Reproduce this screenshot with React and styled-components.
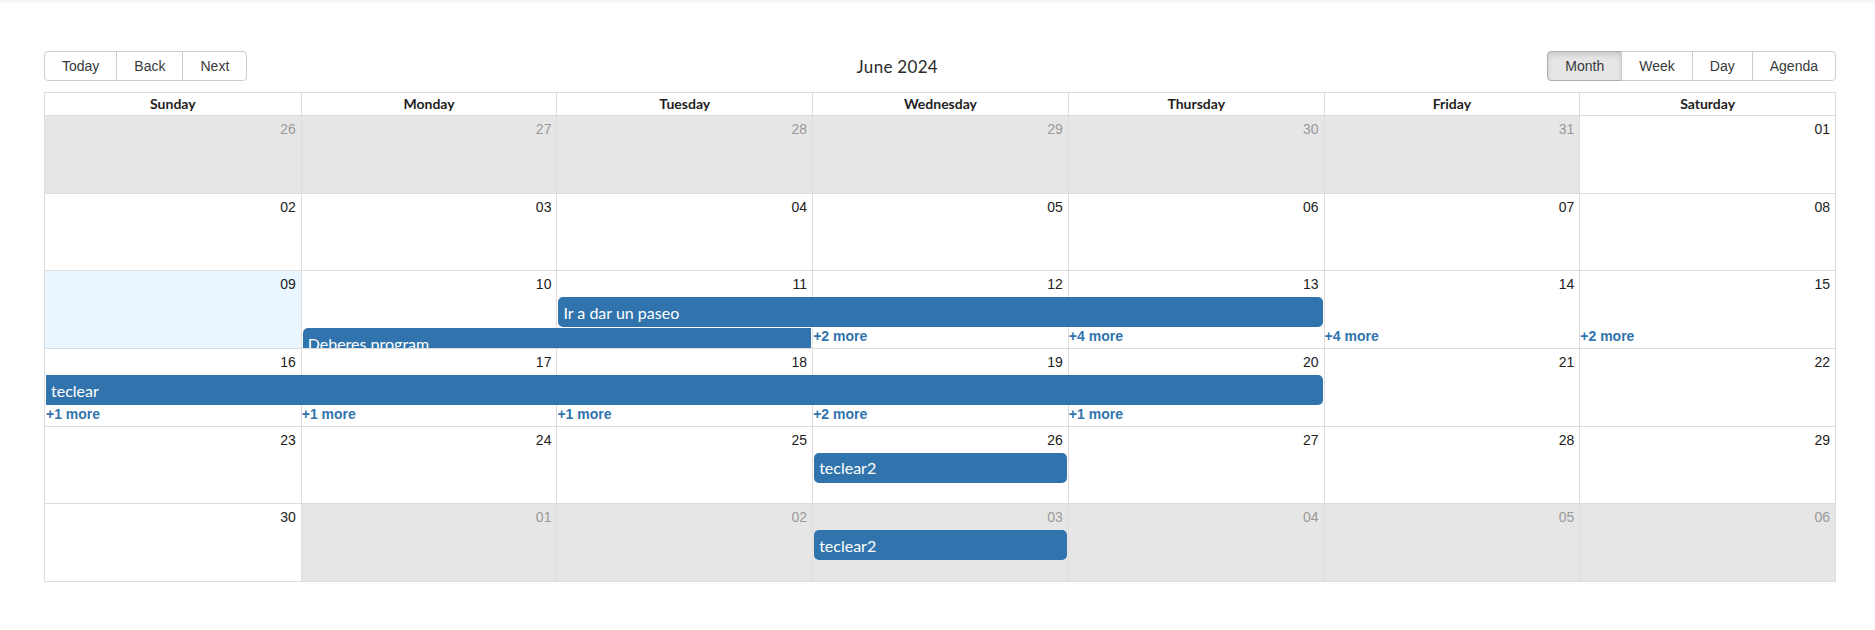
import React from "react";
import styled, { createGlobalStyle, css } from "styled-components";

const Global = createGlobalStyle`
  html, body { margin: 0; padding: 0; background: #fff; }
  body { font-family: "Liberation Sans", Arial, sans-serif; color: #373a3c; }
  * { box-sizing: border-box; }
`;

const TopShade = styled.div`
  height: 2px;
  background: #f4f4f4;
  box-shadow: 0 1px 5px rgba(0, 0, 0, 0.07);
`;

const Page = styled.div`
  padding: 49px 39px 0 44px;
`;

const Toolbar = styled.div`
  display: flex;
  align-items: center;
  margin-bottom: 11px;
`;

const Group = styled.div`
  display: inline-flex;
`;

const Btn = styled.button`
  font-family: "Liberation Sans", Arial, sans-serif;
  font-size: 14px;
  color: #373a3c;
  background: ${(p) => (p.$active ? "#e6e6e6" : "#fff")};
  border: 1px solid ${(p) => (p.$active ? "#adadad" : "#ccc")};
  box-shadow: ${(p) => (p.$active ? "inset 0 3px 5px rgba(0,0,0,.125)" : "none")};
  height: 30px;
  padding: 0 17px;
  margin: 0;
  border-radius: 0;
  & + & { margin-left: -1px; }
  &:first-child { border-radius: 4px 0 0 4px; }
  &:last-child { border-radius: 0 4px 4px 0; }
`;

const Label = styled.span`
  flex: 1;
  text-align: center;
  font-family: Lato, "Open Sans", sans-serif;
  font-size: 17px;
  font-weight: 400;
  color: #2b2b2b;
  letter-spacing: 0.3px;
`;

const Month = styled.div`
  border: 1px solid #ddd;
  display: flex;
  flex-direction: column;
  height: 490px;
`;

const HeaderRow = styled.div`
  display: grid;
  grid-template-columns: repeat(7, 1fr);
  border-bottom: 1px solid #ddd;
  height: 23px;
`;

const HeaderCell = styled.div`
  text-align: center;
  font-family: Lato, "Open Sans", sans-serif;
  font-weight: 700;
  font-size: 14px;
  line-height: 21px;
  color: #1e1e1e;
  & + & { border-left: 1px solid #ddd; }
`;

const Week = styled.div`
  flex: 1;
  display: grid;
  grid-template-columns: repeat(7, 1fr);
  grid-template-rows: 26px 31px 1fr;
  overflow: hidden;
  min-height: 0;
  & + & { border-top: 1px solid #ddd; }
`;

const DayBg = styled.div`
  grid-row: 1 / -1;
  grid-column: ${(p) => p.$col + 1};
  background: ${(p) => (p.$off ? "#e6e6e6" : p.$today ? "#eaf6ff" : "transparent")};
  ${(p) => p.$col > 0 && css`border-left: 1px solid #ddd;`}
`;

const DateCell = styled.div`
  grid-row: 1;
  grid-column: ${(p) => p.$col + 1};
  text-align: right;
  padding: 5px 5px 0 0;
  font-size: 14px;
  line-height: 16px;
  color: ${(p) => (p.$off ? "#999" : "#222")};
  z-index: 1;
`;

const Segment = styled.div`
  grid-row: ${(p) => p.$level + 1};
  grid-column: ${(p) => p.$start + 1} / span ${(p) => p.$span};
  padding: 0 1px 1px ${(p) => (p.$start === 0 ? "1px" : "2px")};
  overflow: hidden;
  min-height: 0;
  z-index: 1;
`;

const Event = styled.div`
  background: #3174ad;
  color: #fff;
  height: 30px;
  padding: 0 5px;
  display: flex;
  align-items: center;
  font-family: Lato, "Open Sans", sans-serif;
  font-size: 16px;
  border-radius: ${(p) =>
    `${p.$prior ? 0 : 5}px ${p.$after ? 0 : 5}px ${p.$after ? 0 : 5}px ${p.$prior ? 0 : 5}px`};
  white-space: nowrap;
  overflow: hidden;
`;

const More = styled.a`
  grid-row: 3;
  grid-column: ${(p) => p.$col + 1};
  padding-left: 1px;
  font-size: 14px;
  font-weight: 700;
  line-height: 16px;
  color: #3174ad;
  text-decoration: none;
  z-index: 1;
`;

const days = ["Sunday", "Monday", "Tuesday", "Wednesday", "Thursday", "Friday", "Saturday"];

const pad = (n) => String(n).padStart(2, "0");

const weeks = [
  {
    dates: [26, 27, 28, 29, 30, 31, 1],
    off: [0, 1, 2, 3, 4, 5],
    events: [],
    more: [],
  },
  { dates: [2, 3, 4, 5, 6, 7, 8], off: [], events: [], more: [] },
  {
    dates: [9, 10, 11, 12, 13, 14, 15],
    off: [],
    today: 0,
    events: [
      { level: 1, start: 2, span: 3, title: "Ir a dar un paseo" },
      { level: 2, start: 1, span: 2, title: "Deberes program", after: true },
    ],
    more: [
      [3, 2],
      [4, 4],
      [5, 4],
      [6, 2],
    ],
  },
  {
    dates: [16, 17, 18, 19, 20, 21, 22],
    off: [],
    events: [{ level: 1, start: 0, span: 5, title: "teclear", prior: true }],
    more: [
      [0, 1],
      [1, 1],
      [2, 1],
      [3, 2],
      [4, 1],
    ],
  },
  {
    dates: [23, 24, 25, 26, 27, 28, 29],
    off: [],
    events: [{ level: 1, start: 3, span: 1, title: "teclear2" }],
    more: [],
  },
  {
    dates: [30, 1, 2, 3, 4, 5, 6],
    off: [1, 2, 3, 4, 5, 6],
    events: [{ level: 1, start: 3, span: 1, title: "teclear2" }],
    more: [],
  },
];

export default function App() {
  return (
    <>
      <Global />
      <TopShade />
      <Page>
        <Toolbar>
          <Group>
            <Btn>Today</Btn>
            <Btn>Back</Btn>
            <Btn>Next</Btn>
          </Group>
          <Label>June 2024</Label>
          <Group>
            <Btn $active>Month</Btn>
            <Btn>Week</Btn>
            <Btn>Day</Btn>
            <Btn>Agenda</Btn>
          </Group>
        </Toolbar>
        <Month>
          <HeaderRow>
            {days.map((d) => (
              <HeaderCell key={d}>{d}</HeaderCell>
            ))}
          </HeaderRow>
          {weeks.map((w, wi) => (
            <Week key={wi}>
              {w.dates.map((d, i) => (
                <DayBg key={"bg" + i} $col={i} $off={w.off.includes(i)} $today={w.today === i} />
              ))}
              {w.dates.map((d, i) => (
                <DateCell key={"d" + i} $col={i} $off={w.off.includes(i)}>
                  {pad(d)}
                </DateCell>
              ))}
              {w.events.map((e, i) => (
                <Segment key={"e" + i} $level={e.level} $start={e.start} $span={e.span}>
                  <Event $prior={e.prior} $after={e.after}>{e.title}</Event>
                </Segment>
              ))}
              {w.more.map(([c, n]) => (
                <More key={"m" + c} $col={c} href="#">
                  +{n} more
                </More>
              ))}
            </Week>
          ))}
        </Month>
      </Page>
    </>
  );
}
